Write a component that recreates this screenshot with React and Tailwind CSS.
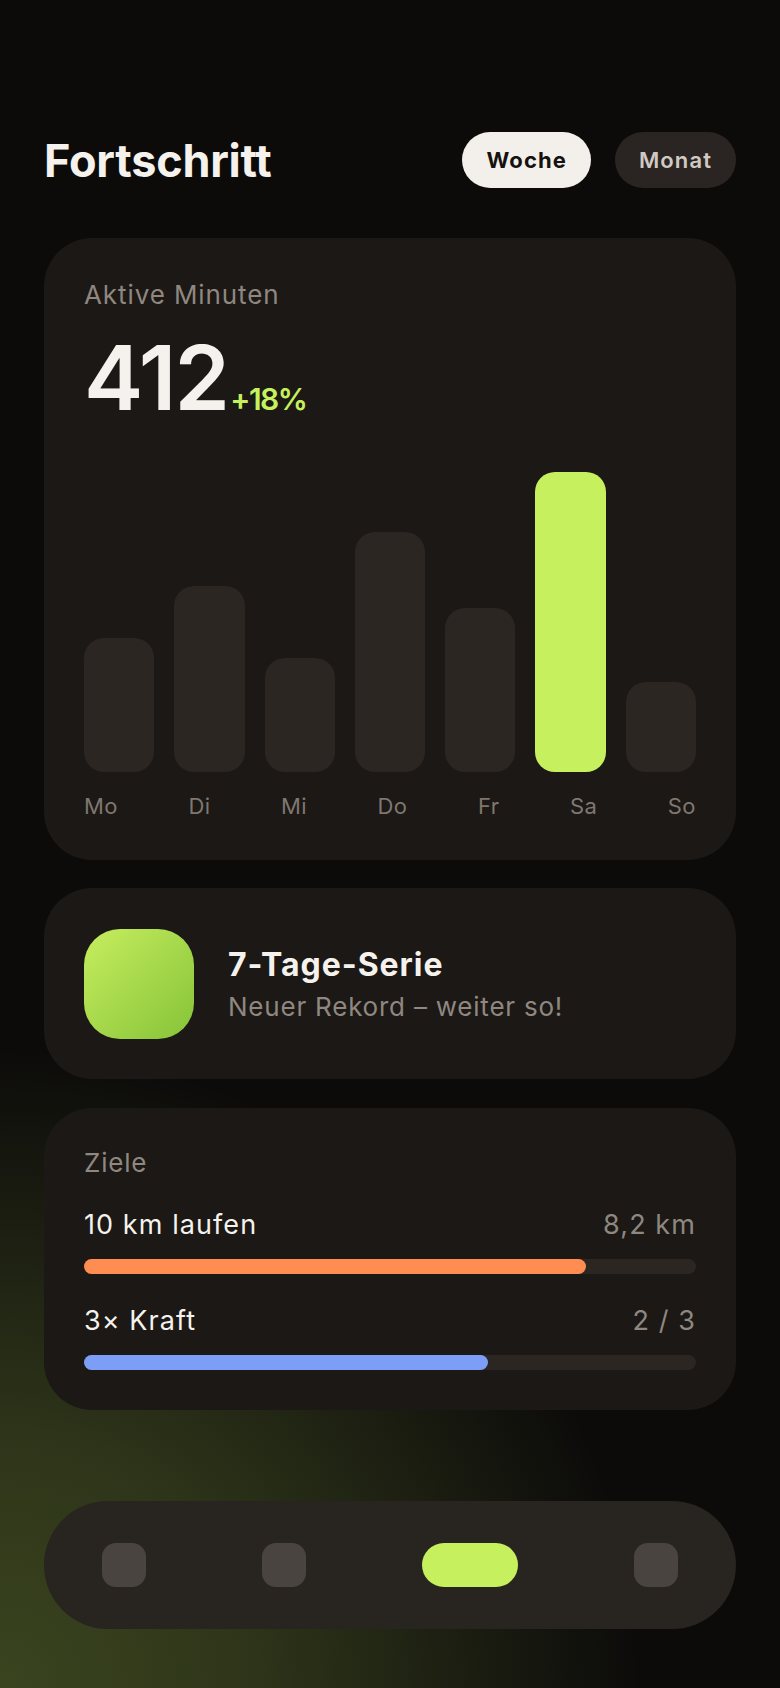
import React from "react";

const bars = [
  { day: "Mo", h: 134 },
  { day: "Di", h: 186 },
  { day: "Mi", h: 114 },
  { day: "Do", h: 240 },
  { day: "Fr", h: 164 },
  { day: "Sa", h: 300, active: true },
  { day: "So", h: 90 },
];

const goals = [
  { label: "10 km laufen", value: "8,2 km", pct: 82, color: "bg-[#ff8c50]" },
  { label: "3× Kraft", value: "2 / 3", pct: 66, color: "bg-[#7c9ef7]" },
];

const App = () => {
  return (
    <div className="min-h-screen w-full bg-[#0c0b0a] bg-[radial-gradient(circle_640px_at_0%_100%,rgba(198,240,94,0.25)_0%,rgba(198,240,94,0.18)_40%,transparent_100%)] font-['Inter',sans-serif] text-[#f5f2ed]">
      <div className="flex flex-col px-11 pt-[132px] pb-[60px]">
        {/* header */}
        <div className="flex h-14 items-center justify-between">
          <h1 className="text-[45px] font-bold leading-none tracking-[-0.005em] text-[#f5f2ed]">Fortschritt</h1>
          <div className="flex gap-6">
            <button className="h-14 rounded-full bg-[#f3f0eb] px-6 text-[22px] font-bold tracking-[0.05em] text-[#15120f]">
              Woche
            </button>
            <button className="h-14 rounded-full bg-[#2a2522] px-6 text-[22px] font-semibold tracking-[0.05em] text-[#d2cac2]">
              Monat
            </button>
          </div>
        </div>

        {/* active minutes */}
        <div className="mt-[50px] rounded-[48px] bg-[#1b1815] px-10 pt-[42px] pb-10">
          <div className="text-[26px] leading-[30px] tracking-[0.035em] text-[#8f8780]">Aktive Minuten</div>
          <div className="mt-[23px] flex items-baseline gap-0.5">
            <span className="text-[89px] font-semibold leading-none tracking-[-0.02em] text-[#f5f2ed]">412</span>
            <span className="text-[30px] font-semibold leading-none tracking-[-0.05em] text-[#c6f05e]">+18%</span>
          </div>
          <div className="mt-[50px] flex h-[300px] items-end gap-5">
            {bars.map((b) => (
              <div
                key={b.day}
                className={`flex-1 rounded-[20px] ${b.active ? "bg-[#c6f05e]" : "bg-[#2b2622]"}`}
                style={{ height: b.h }}
              />
            ))}
          </div>
          <div className="mt-5 flex justify-between text-[22px] leading-[28px] tracking-[0.02em] text-[#7f7770]">
            {bars.map((b) => (
              <span key={b.day}>{b.day}</span>
            ))}
          </div>
        </div>

        {/* streak */}
        <div className="mt-7 flex h-[191px] items-center gap-[34px] rounded-[48px] bg-[#1b1815] px-10">
          <div className="h-[110px] w-[110px] shrink-0 rounded-[36px] bg-gradient-to-br from-[#c6ee5e] to-[#86c338]" />
          <div className="flex flex-col">
            <div className="text-[32px] font-bold leading-[38px] tracking-[0.03em] text-[#f5f2ed]">7-Tage-Serie</div>
            <div className="mt-2 text-[26px] leading-[30px] tracking-[0.03em] text-[#8f8780]">Neuer Rekord – weiter so!</div>
          </div>
        </div>

        {/* goals */}
        <div className="mt-[29px] rounded-[48px] bg-[#1b1815] p-10">
          <div className="text-[26px] leading-[30px] tracking-[0.03em] text-[#8f8780]">Ziele</div>
          {goals.map((g) => (
            <div key={g.label} className="mt-[30px]">
              <div className="flex items-center justify-between text-[27px] leading-[33px] tracking-[0.04em]">
                <span className="text-[#f5f2ed]">{g.label}</span>
                <span className="text-[#8f8780]">{g.value}</span>
              </div>
              <div className="mt-[18px] h-[15px] w-full rounded-full bg-[#2b2622]">
                <div className={`h-full rounded-full ${g.color}`} style={{ width: `${g.pct}%` }} />
              </div>
            </div>
          ))}
        </div>

        {/* bottom nav */}
        <div className="mt-[91px] flex h-32 items-center justify-between rounded-full bg-[#28241f] px-[58px]">
          <div className="h-11 w-11 rounded-[14px] bg-[#4a4440]" />
          <div className="h-11 w-11 rounded-[14px] bg-[#4a4440]" />
          <div className="h-11 w-24 rounded-full bg-[#c6f05e]" />
          <div className="h-11 w-11 rounded-[14px] bg-[#4a4440]" />
        </div>
      </div>
    </div>
  );
};

export default App;
